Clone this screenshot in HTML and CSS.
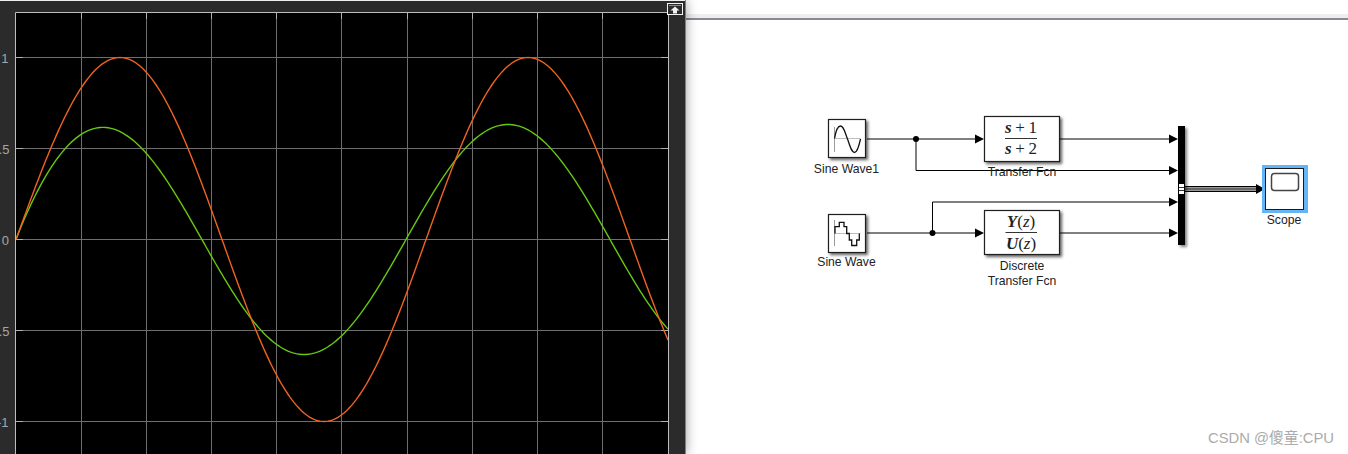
FILE: index.html
```html
<!DOCTYPE html>
<html lang="en">
<head>
    <meta charset="UTF-8">
    <title>Scope and model</title>
    <link rel="stylesheet" href="styles.css">
</head>
<body>

    <div class="page">
        <div class="scope-panel">
            <svg class="scope-svg" width="685" height="454" viewBox="0 0 685 454">
                <rect class="panel-edge" x="0" y="0" width="685" height="1"></rect>
                <rect class="plot-bg" x="15.5" y="12.5" width="653" height="450"></rect>
                <g id="plot-grid"></g>
                <polyline id="curve-green" class="curve-green"></polyline>
                <polyline id="curve-orange" class="curve-orange"></polyline>
                <path class="plot-frame" d="M15.5 454V12.5H668.5V454"></path>

                <text class="tick-label" x="8.5" y="63">1</text>
                <text class="tick-label" x="9.5" y="154">.5</text>
                <text class="tick-label" x="9" y="245">0</text>
                <text class="tick-label" x="9.5" y="336">.5</text>
                <text class="tick-label" x="8.5" y="427">-1</text>

                <!-- undock button -->
                <rect class="undock-box" x="667.5" y="3.5" width="15" height="11"></rect>
                <path class="undock-bar" d="M669 5.5H681"></path>
                <path class="undock-arrow" d="M675 6.5L679.5 10.5H677V13.5H673V10.5H670.5Z"></path>
            </svg>
        </div>

        <div class="model">
            <div class="model-strip"></div>
            <div class="canvas">
                <svg class="model-svg" width="662" height="434" viewBox="686 20 662 434">
                    <!-- signal lines -->
                    <path class="wire" d="M867 139H975"></path>
                    <path class="wire" d="M916 139V170.5H1169"></path>
                    <path class="wire" d="M1060 139H1169"></path>
                    <path class="wire" d="M867 233H975"></path>
                    <path class="wire" d="M932.5 233V202H1169"></path>
                    <path class="wire" d="M1060 233H1169"></path>
                    <path class="wire-bus" d="M1185 189H1257"></path>
                    <path class="wire-bus-inner" d="M1185 187.9H1257M1185 190.1H1257"></path>

                    <circle class="dot" cx="916" cy="139" r="3"></circle>
                    <circle class="dot" cx="932.5" cy="233" r="3"></circle>

                    <path class="arrow" d="M975 134.5L984 139L975 143.5Z"></path>
                    <path class="arrow" d="M975 228.5L984 233L975 237.5Z"></path>
                    <path class="arrow" d="M1169 134.5L1178 139L1169 143.5Z"></path>
                    <path class="arrow" d="M1169 166L1178 170.5L1169 175Z"></path>
                    <path class="arrow" d="M1169 197.5L1178 202L1169 206.5Z"></path>
                    <path class="arrow" d="M1169 228.5L1178 233L1169 237.5Z"></path>
                    <path class="arrow" d="M1256 184L1265 189L1256 194Z"></path>

                    <!-- Sine Wave1 -->
                    <rect class="block" x="828.5" y="119.5" width="37" height="38"></rect>
                    <path class="icon-axis-h" d="M834 138.5H860.5"></path>
                    <path class="icon-axis-v" d="M834.5 127V152"></path>
                    <path class="icon-line" d="M834.5 138.5C836 130 838 126 840.5 126C844 126 845 133 847.5 139C850 146 851.5 152.5 854.5 152.5C857 152.5 859 146 860.5 139"></path>
                    <text class="label" x="846.5" y="173">Sine Wave1</text>

                    <!-- Transfer Fcn -->
                    <rect class="block" x="984.5" y="116.5" width="75" height="45"></rect>
                    <path class="frac-line" d="M1005 138.5H1037"></path>
                    <text class="math" x="1021" y="133"><tspan class="math-b">s</tspan> + 1</text>
                    <text class="math" x="1021" y="154"><tspan class="math-b">s</tspan> + 2</text>
                    <text class="label" x="1022" y="176">Transfer Fcn</text>

                    <!-- Sine Wave -->
                    <rect class="block" x="828.5" y="214.5" width="37" height="38"></rect>
                    <path class="icon-axis-h" d="M834 233.5H860.5"></path>
                    <path class="icon-axis-v" d="M834.5 220V246"></path>
                    <path class="icon-line" d="M835 233.5V226.7H839.3V222.3H844V226.7H846.7V233.5H849.3V240H851.7V245.5H856.7V240H859.3V233.5"></path>
                    <text class="label" x="846.5" y="266">Sine Wave</text>

                    <!-- Discrete Transfer Fcn -->
                    <rect class="block" x="984.5" y="210.5" width="75" height="44"></rect>
                    <path class="frac-line" d="M1005.5 232.5H1037"></path>
                    <text class="math" x="1021" y="227"><tspan class="math-b">Y</tspan>(<tspan class="math-i">z</tspan>)</text>
                    <text class="math" x="1021" y="249"><tspan class="math-b">U</tspan>(<tspan class="math-i">z</tspan>)</text>
                    <text class="label" x="1022" y="270">Discrete</text>
                    <text class="label" x="1022" y="285">Transfer Fcn</text>

                    <!-- Mux -->
                    <rect class="mux" x="1178" y="126" width="7" height="119"></rect>
                    <rect class="mux-port" x="1179" y="184" width="5" height="10"></rect>
                    <path class="mux-port-line" d="M1179 187.5H1184M1179 190.5H1184"></path>

                    <!-- Scope -->
                    <rect class="scope-select" x="1262" y="165" width="46" height="48"></rect>
                    <rect class="scope-block" x="1265.5" y="168.5" width="38" height="41"></rect>
                    <rect class="scope-screen" x="1271.5" y="173.5" width="27" height="17" rx="3"></rect>
                    <text class="label" x="1284" y="224">Scope</text>
                </svg>
                <div class="watermark">CSDN @傻童:CPU</div>
            </div>
        </div>
    </div>

    <script src="plot.js"></script>

</body>
</html>
```

FILE: styles.css
```css
html, body {
    margin: 0;
    padding: 0;
    background-color: #FFFFFF;
}

.page {
    display: flex;
    width: 1348px;
    height: 454px;
    overflow: hidden;
}

.scope-panel {
    flex: none;
    width: 685px;
    height: 454px;
    background-color: #2B2B2B;
    border-right: 1px solid #808080;
    box-shadow: 0 0 11px rgba(0, 0, 0, 0.38);
    position: relative;
    z-index: 2;
}

.scope-svg {
    display: block;
}

.panel-edge {
    fill: #F0F0F0;
}

.plot-bg {
    fill: #000000;
}

.plot-frame {
    fill: none;
    stroke: #BDBDBD;
    stroke-width: 1;
}

.grid-line {
    stroke: #6E6E6E;
    stroke-width: 1;
}

.tick-line {
    stroke: #B0B0B0;
    stroke-width: 1;
}

.tick-label {
    font-family: "Liberation Sans", Arial, sans-serif;
    font-size: 13px;
    fill: #A6A6A6;
    text-anchor: end;
}

.curve-orange,
.curve-green {
    fill: none;
    stroke-width: 1.4;
}

.curve-orange {
    stroke: #F06420;
}

.curve-green {
    stroke: #66C810;
}

.undock-box {
    fill: #2B2B2B;
    stroke: #F2F2F2;
    stroke-width: 1;
}

.undock-bar {
    stroke: #8C8C8C;
    stroke-width: 1;
}

.undock-arrow {
    fill: #F2F2F2;
}

.model {
    flex: 1;
    display: flex;
    flex-direction: column;
    min-width: 0;
}

.model-strip {
    flex: none;
    height: 14px;
    border-bottom: 4px solid #EEEEEE;
}

.canvas {
    flex: 1;
    position: relative;
    border-top: 2px solid #8A8A94;
}

.model-svg {
    display: block;
}

.wire {
    fill: none;
    stroke: #000000;
    stroke-width: 1;
}

.wire-bus {
    fill: none;
    stroke: #000000;
    stroke-width: 6;
}

.wire-bus-inner {
    fill: none;
    stroke: #FFFFFF;
    stroke-width: 1;
}

.dot,
.arrow {
    fill: #000000;
}

.block {
    fill: #FFFFFF;
    stroke: #1F1F1F;
    stroke-width: 1.2;
    filter: drop-shadow(2px 2px 1.5px rgba(0, 0, 0, 0.6));
}

.icon-axis-h {
    stroke: #BDBDBD;
    stroke-width: 1;
}

.icon-axis-v {
    stroke: #9A9A9A;
    stroke-width: 1;
}

.icon-line {
    fill: none;
    stroke: #111111;
    stroke-width: 1.3;
}

.label {
    font-family: "Liberation Sans", Arial, sans-serif;
    font-size: 12.2px;
    fill: #222222;
    text-anchor: middle;
}

.math {
    font-family: "Liberation Serif", "Times New Roman", serif;
    font-size: 17px;
    word-spacing: -0.5px;
    fill: #222222;
    text-anchor: middle;
}

.math-i {
    font-style: italic;
}

.math-b {
    font-style: italic;
    font-weight: bold;
}

.frac-line {
    stroke: #333333;
    stroke-width: 1;
}

.mux {
    fill: #000000;
    filter: drop-shadow(2px 2px 1.5px rgba(0, 0, 0, 0.5));
}

.mux-port {
    fill: #FFFFFF;
}

.mux-port-line {
    stroke: #333333;
    stroke-width: 1;
}

.scope-select {
    fill: #64B5F6;
}

.scope-block {
    fill: #FFFFFF;
    stroke: #1A1A1A;
    stroke-width: 1;
}

.scope-screen {
    fill: #FFFFFF;
    stroke: #444444;
    stroke-width: 1.5;
}

.watermark {
    position: absolute;
    left: 522px;
    top: 408px;
    font-family: "Liberation Sans", "Noto Sans CJK SC", sans-serif;
    font-size: 14.8px;
    line-height: 20px;
    color: #ABABAB;
    white-space: nowrap;
}
```

FILE: plot.js
```js
// Draws the scope grid and the two signal traces in screen coordinates
var SVG_NS = "http://www.w3.org/2000/svg";
var LEFT = 16, RIGHT = 668, ZERO = 239.5, UNIT = 182, PERIOD = 408;

function addLine(parent, cls, x1, y1, x2, y2) {
    var line = document.createElementNS(SVG_NS, "line");
    line.setAttribute("class", cls);
    line.setAttribute("x1", x1);
    line.setAttribute("y1", y1);
    line.setAttribute("x2", x2);
    line.setAttribute("y2", y2);
    parent.appendChild(line);
}

function drawGrid() {
    var grid = document.getElementById("plot-grid");
    for (var i = 0; i < 9; i++) {
        var x = Math.floor(81.5 + 65.1 * i) + 0.5;
        addLine(grid, "grid-line", x, 13, x, 454);
        addLine(grid, "tick-line", x, 13, x, 19);
    }
    [57.5, 148.5, 239.5, 330.5, 421.5].forEach(function (y) {
        addLine(grid, "grid-line", 16, y, 668, y);
        addLine(grid, "tick-line", 16, y, 23, y);
        addLine(grid, "tick-line", 661, y, 668, y);
    });
}

// Input: peak at x=120, first quarter wave slightly stretched
function orange(x) {
    if (x < 120) {
        return Math.sin((x - LEFT) / 104 * Math.PI / 2);
    }
    return Math.cos(2 * Math.PI * (x - 120) / PERIOD);
}

// Filter output: steady sine plus the start-up decay
function green(x) {
    return 0.632 * Math.cos(2 * Math.PI * (x - 100) / PERIOD) - 0.1725 * Math.exp(-(x - LEFT) / 36);
}

function drawCurve(id, fn) {
    var pts = [];
    for (var x = LEFT; x <= RIGHT; x += 2) {
        pts.push(x + "," + (ZERO - UNIT * fn(x)).toFixed(2));
    }
    document.getElementById(id).setAttribute("points", pts.join(" "));
}

drawGrid();
drawCurve("curve-green", green);
drawCurve("curve-orange", orange);
```
